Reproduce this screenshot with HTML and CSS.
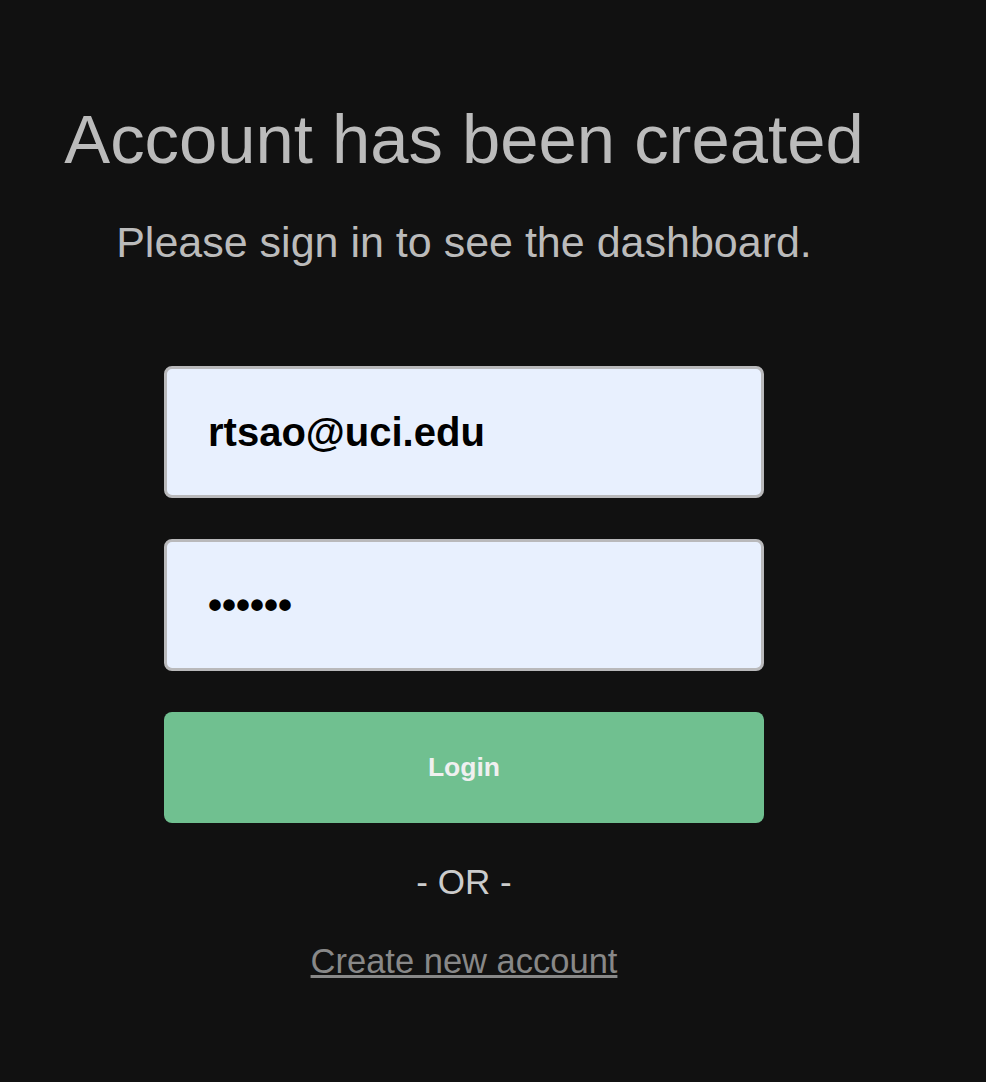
FILE: index.html
```html
<!DOCTYPE html>
<html>
<head>
    <meta charset="UTF-8">
    <title>Account created</title>
    <link rel="stylesheet" href="styles.css">
</head>
<body>
    <div class="page">
        <h1 class="title">Account has been created</h1>
        <p class="subtitle">Please sign in to see the dashboard.</p>

        <form class="login-form" onsubmit="return false">
            <input class="field" type="email" value="rtsao@uci.edu">
            <input class="field" type="password" value="secret">
            <button class="login-btn" type="submit">Login</button>
        </form>

        <div class="divider">- OR -</div>
        <a class="create-link" href="#">Create new account</a>
    </div>
</body>
</html>
```

FILE: styles.css
```css
:root {
    --bg-color: #111111;
    --title-color: #bbbbbb;
    --field-bg: #e8f0fe;
    --field-border: #b9b9bb;
    --green: #70c090;
}

body {
    margin: 0;
    background: var(--bg-color);
    font-family: 'Liberation Sans', Arial, sans-serif;
}

.page {
    width: 928px;
    padding-top: 100px;
    display: flex;
    flex-direction: column;
    align-items: center;
    text-align: center;
}

.title {
    margin: 0;
    font-size: 68.8px;
    font-weight: normal;
    color: var(--title-color);
}

.subtitle {
    margin: 39px 0 0;
    font-size: 43px;
    color: var(--title-color);
}

.login-form {
    margin-top: 99px;
    width: 600px;
    display: flex;
    flex-direction: column;
    gap: 41px;
}

.field {
    box-sizing: border-box;
    width: 600px;
    height: 132px;
    margin: 0;
    padding: 0 20px 0 41px;
    border: 3px solid var(--field-border);
    border-radius: 8px;
    background: var(--field-bg);
    font-family: 'Liberation Sans', Arial, sans-serif;
    font-size: 40px;
    font-weight: bold;
    color: #000;
    outline: none;
}

.login-btn {
    height: 111px;
    margin: 0;
    border: none;
    border-radius: 8px;
    background: var(--green);
    color: #f0f0f0;
    font-family: 'Liberation Sans', Arial, sans-serif;
    font-size: 26.5px;
    font-weight: bold;
    cursor: pointer;
}

.divider {
    margin-top: 39px;
    font-size: 35px;
    color: #cccccc;
}

.create-link {
    margin-top: 40px;
    font-size: 34.5px;
    color: #888888;
}
```
